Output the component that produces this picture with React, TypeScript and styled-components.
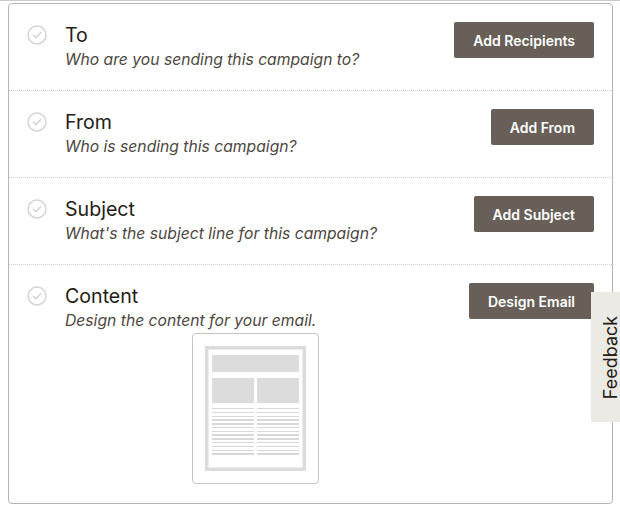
import React from "react";
import styled, { createGlobalStyle } from "styled-components";

const GlobalStyle = createGlobalStyle`
  html, body {
    margin: 0;
    padding: 0;
    background: #ffffff;
  }
  body {
    font-family: Inter, "Noto Sans", sans-serif;
    color: #241c15;
  }
`;

interface IStep {
  title: string;
  description: string;
  action: string;
  preview?: boolean;
}

const steps: IStep[] = [
  {
    title: "To",
    description: "Who are you sending this campaign to?",
    action: "Add Recipients",
  },
  {
    title: "From",
    description: "Who is sending this campaign?",
    action: "Add From",
  },
  {
    title: "Subject",
    description: "What's the subject line for this campaign?",
    action: "Add Subject",
  },
  {
    title: "Content",
    description: "Design the content for your email.",
    action: "Design Email",
    preview: true,
  },
];

function CheckIcon() {
  return (
    <svg width="20" height="20" viewBox="0 0 20 20" fill="none">
      <circle cx="10" cy="10" r="9" stroke="#d2d2d2" strokeWidth="1.4" />
      <path
        d="M6.3 10.2 L8.9 12.7 L13.7 7.5"
        stroke="#d2d2d2"
        strokeWidth="1.4"
        strokeLinecap="round"
        strokeLinejoin="round"
      />
    </svg>
  );
}

function EmailPreview() {
  return (
    <PreviewBox>
      <PreviewPage>
        <PreviewHeader />
        <PreviewColumns>
          {[0, 1].map((col) => (
            <PreviewColumn key={col}>
              <PreviewImage />
              <PreviewLines>
                {Array.from({ length: 13 }).map((_, i) => (
                  <PreviewLine key={i} />
                ))}
              </PreviewLines>
            </PreviewColumn>
          ))}
        </PreviewColumns>
      </PreviewPage>
    </PreviewBox>
  );
}

function App() {
  return (
    <>
      <GlobalStyle />
      <Page>
        <Card>
          {steps.map((step, idx) => (
            <StepRow key={step.title} last={idx === steps.length - 1}>
              <IconCell>
                <CheckIcon />
              </IconCell>
              <StepBody>
                <StepTitle>{step.title}</StepTitle>
                <StepDescription>{step.description}</StepDescription>
                {step.preview && <EmailPreview />}
              </StepBody>
              <ActionButton>{step.action}</ActionButton>
            </StepRow>
          ))}
        </Card>
        <FeedbackTab>
          <FeedbackLabel>Feedback</FeedbackLabel>
        </FeedbackTab>
      </Page>
    </>
  );
}

export default App;

const Page = styled.div`
  border-top: 1px solid #c8c8c8;
  padding: 2px 7px 0 8px;
  height: 508px;
  box-sizing: border-box;
`;

const Card = styled.div`
  border: 1px solid #b5b5b5;
  border-radius: 4px;
  background: #fff;
`;

const StepRow = styled.div<{ last?: boolean }>`
  display: flex;
  align-items: flex-start;
  padding: 18px 18px ${(p) => (p.last ? "19px" : "0")} 18px;
  height: ${(p) => (p.last ? "auto" : "87px")};
  box-sizing: border-box;
  border-bottom: ${(p) => (p.last ? "none" : "1px dotted #cccccc")};
`;

const IconCell = styled.div`
  width: 38px;
  flex-shrink: 0;
  padding-top: 3px;
  display: flex;
`;

const StepBody = styled.div`
  flex: 1;
  display: flex;
  flex-direction: column;
  padding-top: 1px;
`;

const StepTitle = styled.div`
  font-size: 19.6px;
  line-height: 24px;
  color: #241c15;
`;

const StepDescription = styled.div`
  margin-top: 1px;
  font-size: 15.7px;
  line-height: 24px;
  font-style: italic;
  color: #4d4741;
`;

const ActionButton = styled.button`
  flex-shrink: 0;
  height: 36px;
  padding: 0 19px;
  border: none;
  border-radius: 2px;
  background: #675f58;
  color: #ffffff;
  font-family: Inter, "Noto Sans", sans-serif;
  font-size: 14px;
  font-weight: 600;
  cursor: pointer;
`;

const PreviewBox = styled.div`
  margin: 0 0 0 127px;
  width: 127px;
  height: 151px;
  box-sizing: border-box;
  border: 1px solid #c4c4c4;
  border-radius: 4px;
  padding: 12px;
`;

const PreviewPage = styled.div`
  height: 100%;
  box-sizing: border-box;
  border: 3px solid #dcdcdc;
  outline: 1px solid #ececec;
  outline-offset: -4px;
  padding: 6px 4px 0 4px;
  display: flex;
  flex-direction: column;
  gap: 6px;
`;

const PreviewHeader = styled.div`
  height: 17px;
  background: #dcdcdc;
`;

const PreviewColumns = styled.div`
  display: flex;
  gap: 3px;
`;

const PreviewColumn = styled.div`
  flex: 1;
  display: flex;
  flex-direction: column;
  gap: 5px;
`;

const PreviewImage = styled.div`
  height: 25px;
  background: #dcdcdc;
`;

const PreviewLines = styled.div`
  display: flex;
  flex-direction: column;
  gap: 2.4px;
`;

const PreviewLine = styled.div`
  height: 1.4px;
  background: #d8d8d8;
`;

const FeedbackTab = styled.div`
  position: fixed;
  right: -11px;
  top: 292px;
  width: 40px;
  height: 130px;
  background: #ebeae5;
  display: flex;
  align-items: center;
  justify-content: center;
`;

const FeedbackLabel = styled.span`
  transform: rotate(-90deg);
  white-space: nowrap;
  font-size: 18px;
  color: #241c15;
`;
